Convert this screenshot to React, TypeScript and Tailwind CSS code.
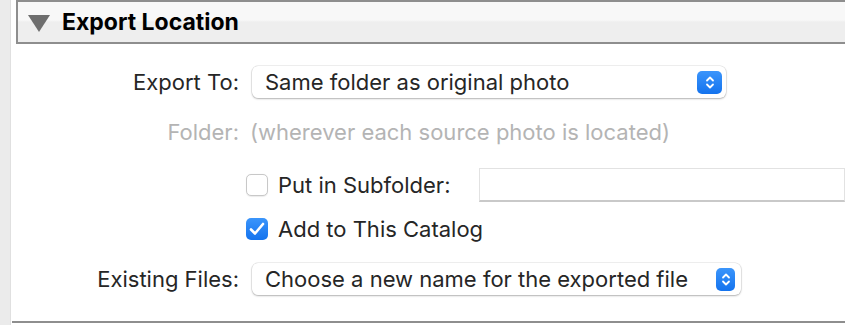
export default function App() {
  const font = { fontFamily: 'Inter, "Liberation Sans", sans-serif' }
  return (
    <div className="flex w-[845px] h-[325px] overflow-hidden bg-white text-[#262626]" style={font}>
      <div className="w-[11px] shrink-0 bg-[#ebebeb] border-r border-[#e0e0e0]" />
      <div className="flex-1 flex flex-col">
        {/* section header */}
        <div className="ml-[5px] h-[44px] border-t-2 border-b-2 border-l-2 border-[#8e8e8e] flex items-center bg-[linear-gradient(#f8f8f8_0%,#f8f8f8_45%,#eeeeee_50%,#eeeeee_100%)]">
          <svg width="22" height="18" viewBox="0 0 22 18" className="ml-[10px] mt-[1px]">
            <polygon points="0,1 22,1 11,18" fill="#6e6e6e" />
          </svg>
          <span className="ml-[12px] text-[23px] font-bold text-black">Export Location</span>
        </div>

        <div className="flex-1 flex flex-col text-[22px]">
          {/* Export To */}
          <div className="flex items-center mt-[21px] h-[34px]">
            <div className="w-[228px] text-right">Export To:</div>
            <div className="ml-[13px] w-[474px] h-[32px] rounded-[6px] bg-white shadow-[0_0_0_0.5px_rgba(0,0,0,0.12),0_1px_2px_rgba(0,0,0,0.25)] flex items-center pl-[13px] pr-[4px]">
              <span className="flex-1">Same folder as original photo</span>
              <Stepper />
            </div>
          </div>

          {/* Folder */}
          <div className="flex items-center mt-[18px] h-[30px] text-[#b4b4b4]">
            <div className="w-[228px] text-right">Folder:</div>
            <div className="ml-[11px]">(wherever each source photo is located)</div>
          </div>

          {/* Put in Subfolder */}
          <div className="flex items-center mt-[21px] h-[34px]">
            <div className="ml-[235px] w-[22px] h-[22px] rounded-[5px] border border-[#c8c8c8] bg-white shadow-[0_0.5px_1px_rgba(0,0,0,0.08)]" />
            <span className="ml-[10px]">Put in Subfolder:</span>
            <div className="ml-[auto] w-[366px] h-[34px] bg-white border border-[#e2e2e2] border-b-2 border-b-[#c9c9c9]" />
          </div>

          {/* Add to This Catalog */}
          <div className="flex items-center mt-[16px] h-[22px]">
            <div className="ml-[235px] w-[22px] h-[22px] rounded-[5px] bg-[linear-gradient(#3b95fb,#1473ee)] flex items-center justify-center">
              <svg width="16" height="14" viewBox="0 0 16 14">
                <path d="M2 7.5 L6 11.5 L14 2" fill="none" stroke="white" strokeWidth="2.6" strokeLinecap="round" strokeLinejoin="round" />
              </svg>
            </div>
            <span className="ml-[10px]">Add to This Catalog</span>
          </div>

          {/* Existing Files */}
          <div className="flex items-center mt-[22px] h-[34px]">
            <div className="w-[228px] text-right">Existing Files:</div>
            <div className="ml-[13px] w-[489px] h-[32px] rounded-[6px] bg-white shadow-[0_0_0_0.5px_rgba(0,0,0,0.12),0_1px_2px_rgba(0,0,0,0.25)] flex items-center pl-[13px] pr-[6px]">
              <span className="flex-1">Choose a new name for the exported file</span>
              <Stepper small />
            </div>
          </div>
        </div>

        <div className="ml-[1px] mb-[2px] h-[2px] bg-[#8e8e8e]" />
      </div>
    </div>
  )
}

function Stepper({ small }: { small?: boolean }) {
  return (
    <div className={`${small ? 'w-[19px]' : 'w-[25px]'} h-[23px] rounded-[5px] bg-[linear-gradient(#3b95fb,#1473ee)] flex items-center justify-center`}>
      <svg width="10" height="15" viewBox="0 0 10 15">
        <path d="M2 5.5 L5 2.5 L8 5.5 M2 9.5 L5 12.5 L8 9.5" fill="none" stroke="white" strokeWidth="1.8" strokeLinecap="round" strokeLinejoin="round" />
      </svg>
    </div>
  )
}
